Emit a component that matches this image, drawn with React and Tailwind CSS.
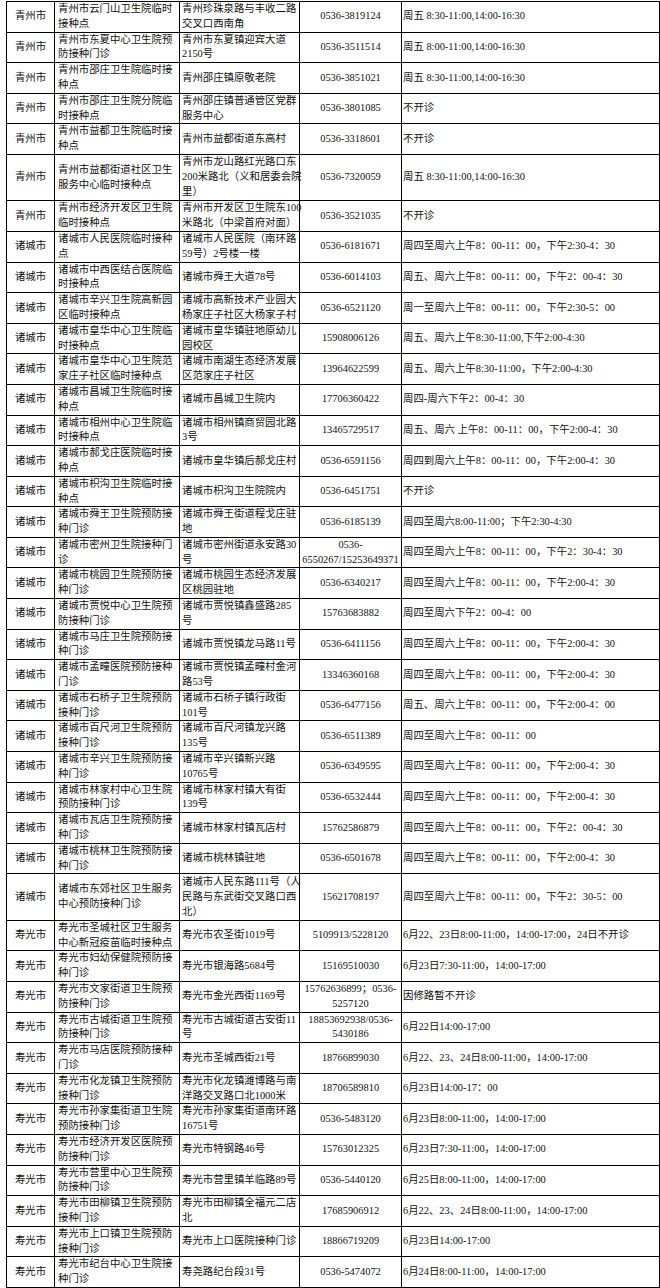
const rows = [
  ["青州市", ["青州市云门山卫生院临时", "接种点"], ["青州珍珠泉路与丰收二路", "交叉口西南角"], ["0536-3819124"], "周五 8:30-11:00,14:00-16:30"],
  ["青州市", ["青州市东夏中心卫生院预", "防接种门诊"], ["青州市东夏镇迎宾大道", "2150号"], ["0536-3511514"], "周五 8:00-11:00,14:00-16:30"],
  ["青州市", ["青州市邵庄卫生院临时接", "种点"], ["青州邵庄镇原敬老院"], ["0536-3851021"], "周五 8:30-11:00,14:00-16:30"],
  ["青州市", ["青州市邵庄卫生院分院临", "时接种点"], ["青州邵庄镇普通管区党群", "服务中心"], ["0536-3801085"], "不开诊"],
  ["青州市", ["青州市益都卫生院临时接", "种点"], ["青州市益都街道东高村"], ["0536-3318601"], "不开诊"],
  ["青州市", ["青州市益都街道社区卫生", "服务中心临时接种点"], ["青州市龙山路红光路口东", "200米路北（义和居委会院", "里）"], ["0536-7320059"], "周五 8:30-11:00,14:00-16:30", true],
  ["青州市", ["青州市经济开发区卫生院", "临时接种点"], ["青州市开发区卫生院东100", "米路北（中梁首府对面）"], ["0536-3521035"], "不开诊"],
  ["诸城市", ["诸城市人民医院临时接种", "点"], ["诸城市人民医院（南环路", "59号）2号楼一楼"], ["0536-6181671"], "周四至周六上午8：00-11：00，下午2:30-4：30"],
  ["诸城市", ["诸城市中西医结合医院临", "时接种点"], ["诸城市舜王大道78号"], ["0536-6014103"], "周五、周六上午8：00-11：00，下午2：00-4：30"],
  ["诸城市", ["诸城市辛兴卫生院高新园", "区临时接种点"], ["诸城市高新技术产业园大", "杨家庄子社区大杨家子村"], ["0536-6521120"], "周一至周六上午8：00-11：00，下午2:30-5：00"],
  ["诸城市", ["诸城市皇华中心卫生院临", "时接种点"], ["诸城市皇华镇驻地原幼儿", "园校区"], ["15908006126"], "周五、周六上午8:30-11:00,下午2:00-4:30"],
  ["诸城市", ["诸城市皇华中心卫生院范", "家庄子社区临时接种点"], ["诸城市南湖生态经济发展", "区范家庄子社区"], ["13964622599"], "周五、周六上午8:30-11:00，下午2:00-4:30"],
  ["诸城市", ["诸城市昌城卫生院临时接", "种点"], ["诸城市昌城卫生院内"], ["17706360422"], "周四-周六下午2：00-4：30"],
  ["诸城市", ["诸城市相州中心卫生院临", "时接种点"], ["诸城市相州镇商贸园北路", "3号"], ["13465729517"], "周五、周六 上午8：00-11：00，下午2:00-4：30"],
  ["诸城市", ["诸城市郝戈庄医院临时接", "种点"], ["诸城市皇华镇后郝戈庄村"], ["0536-6591156"], "周四到周六上午8：00-11：00，下午2:00-4：30"],
  ["诸城市", ["诸城市枳沟卫生院临时接", "种点"], ["诸城市枳沟卫生院院内"], ["0536-6451751"], "不开诊"],
  ["诸城市", ["诸城市舜王卫生院预防接", "种门诊"], ["诸城市舜王街道程戈庄驻", "地"], ["0536-6185139"], "周四至周六8:00-11:00；下午2:30-4:30"],
  ["诸城市", ["诸城市密州卫生院接种门", "诊"], ["诸城市密州街道永安路30", "号"], ["0536-", "6550267/15253649371"], "周四至周六上午8：00-11：00，下午2：30-4：30"],
  ["诸城市", ["诸城市桃园卫生院预防接", "种门诊"], ["诸城市桃园生态经济发展", "区桃园驻地"], ["0536-6340217"], "周四至周六上午8：00-11：00，下午2:00-4：30"],
  ["诸城市", ["诸城市贾悦中心卫生院预", "防接种门诊"], ["诸城市贾悦镇鑫盛路285", "号"], ["15763683882"], "周四至周六下午2：00-4：00"],
  ["诸城市", ["诸城市马庄卫生院预防接", "种门诊"], ["诸城市贾悦镇龙马路11号"], ["0536-6411156"], "周四至周六上午8：00-11：00，下午2:00-4：30"],
  ["诸城市", ["诸城市孟疃医院预防接种", "门诊"], ["诸城市贾悦镇孟疃村金河", "路53号"], ["13346360168"], "周四至周六上午8：00-11：00，下午2:00-4：30"],
  ["诸城市", ["诸城市石桥子卫生院预防", "接种门诊"], ["诸城市石桥子镇行政街", "101号"], ["0536-6477156"], "周五、周六上午8：00-11：00，下午2:00-4：00"],
  ["诸城市", ["诸城市百尺河卫生院预防", "接种门诊"], ["诸城市百尺河镇龙兴路", "135号"], ["0536-6511389"], "周四至周六上午8：00-11：00"],
  ["诸城市", ["诸城市辛兴卫生院预防接", "种门诊"], ["诸城市辛兴镇新兴路", "10765号"], ["0536-6349595"], "周四至周六上午8：00-11：00，下午2:00-4：30"],
  ["诸城市", ["诸城市林家村中心卫生院", "预防接种门诊"], ["诸城市林家村镇大有街", "139号"], ["0536-6532444"], "周四至周六上午8：00-11：00，下午2:00-4：30"],
  ["诸城市", ["诸城市瓦店卫生院预防接", "种门诊"], ["诸城市林家村镇瓦店村"], ["15762586879"], "周四至周六上午8：00-11：00，下午2：00-4：30"],
  ["诸城市", ["诸城市桃林卫生院预防接", "种门诊"], ["诸城市桃林镇驻地"], ["0536-6501678"], "周四至周六上午8：00-11：00，下午2:00-4：30"],
  ["诸城市", ["诸城市东郊社区卫生服务", "中心预防接种门诊"], ["诸城市人民东路111号（人", "民路与东武街交叉路口西", "北）"], ["15621708197"], "周四至周六上午8：00-11：00，下午2：30-5：00", true],
  ["寿光市", ["寿光市圣城社区卫生服务", "中心新冠疫苗临时接种点"], ["寿光市农圣街1019号"], ["5109913/5228120"], "6月22、23日8:00-11:00，14:00-17:00，24日不开诊"],
  ["寿光市", ["寿光市妇幼保健院预防接", "种门诊"], ["寿光市银海路5684号"], ["15169510030"], "6月23日7:30-11:00，14:00-17:00"],
  ["寿光市", ["寿光市文家街道卫生院预", "防接种门诊"], ["寿光市金光西街1169号"], ["15762636899；0536-", "5257120"], "因修路暂不开诊"],
  ["寿光市", ["寿光市古城街道卫生院预", "防接种门诊"], ["寿光市古城街道古安街11", "号"], ["18853692938/0536-", "5430186"], "6月22日14:00-17:00"],
  ["寿光市", ["寿光市马店医院预防接种", "门诊"], ["寿光市圣城西街21号"], ["18766899030"], "6月22、23、24日8:00-11:00，14:00-17:00"],
  ["寿光市", ["寿光市化龙镇卫生院预防", "接种门诊"], ["寿光市化龙镇潍博路与南", "洋路交叉路口北1000米"], ["18706589810"], "6月23日14:00-17：00"],
  ["寿光市", ["寿光市孙家集街道卫生院", "预防接种门诊"], ["寿光市孙家集街道南环路", "16751号"], ["0536-5483120"], "6月23日8:00-11:00，14:00-17:00"],
  ["寿光市", ["寿光市经济开发区医院预", "防接种门诊"], ["寿光市特钢路46号"], ["15763012325"], "6月23日7:30-11:00，14:00-17:00"],
  ["寿光市", ["寿光市营里中心卫生院预", "防接种门诊"], ["寿光市营里镇羊临路89号"], ["0536-5440120"], "6月25日8:00-11:00，14:00-17:00"],
  ["寿光市", ["寿光市田柳镇卫生院预防", "接种门诊"], ["寿光市田柳镇全福元二店", "北"], ["17685906912"], "6月22、23、24日8:00-11:00，14:00-17:00"],
  ["寿光市", ["寿光市上口镇卫生院预防", "接种门诊"], ["寿光市上口医院接种门诊"], ["18866719209"], "6月23日14:00-17:00"],
  ["寿光市", ["寿光市纪台中心卫生院接", "种门诊"], ["寿尧路纪台段31号"], ["0536-5474072"], "6月24日8:00-11:00，14:00-17:00"],
];

// explicit line breaks so every cell wraps exactly like the source table
const Lines = ({ lines }) => (
  <div>
    {lines.map((l, i) => (
      <div key={i} className="whitespace-nowrap">{l}</div>
    ))}
  </div>
);

export default function App() {
  return (
    <div className="bg-white min-h-[1288px] pl-[6px] pt-[1px] font-['Liberation_Serif','Noto_Sans_CJK_SC',serif] text-[10.4px] leading-[14.8px] text-[#111]">
      <div className="w-[654px] border-t border-black">
        {rows.map(([city, name, addr, phone, time, tall], i) => (
          <div
            key={i}
            className={`grid grid-cols-[48px_125px_120px_102px_258px] border-l border-b border-black ${tall ? "h-[46.4px]" : "h-[30.6px]"}`}
          >
            <div className="flex items-center justify-center border-r border-black">{city}</div>
            <div className="flex items-center border-r border-black pl-[3px]">
              <Lines lines={name} />
            </div>
            <div className="flex items-center border-r border-black pl-[2px]">
              <Lines lines={addr} />
            </div>
            <div className="flex items-center justify-center text-center border-r border-black">
              <Lines lines={phone} />
            </div>
            <div className="flex items-center border-r border-black pl-[1px] whitespace-nowrap">{time}</div>
          </div>
        ))}
      </div>
    </div>
  );
}
